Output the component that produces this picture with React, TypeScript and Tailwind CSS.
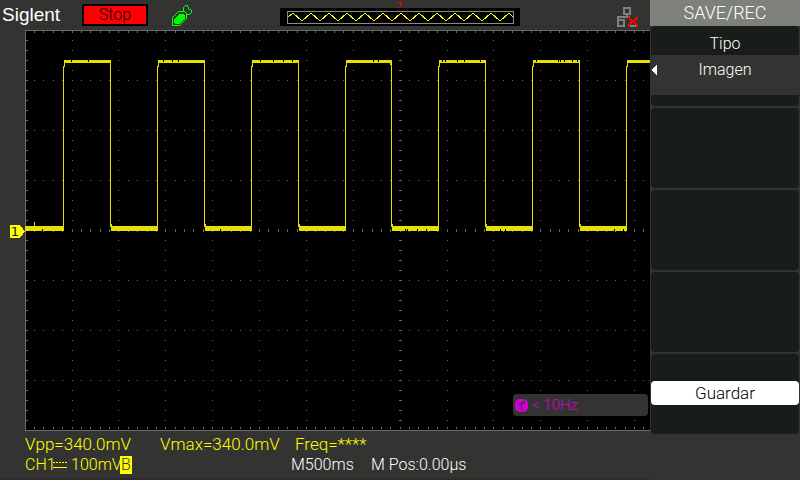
import React from "react";

const PLOT_W = 625;
const PLOT_H = 400;
const STEP_X = 9.375;
const CENTER_X = 375;

function range(n: number) {
  return Array.from({ length: n }, (_, i) => i);
}

// Rectangles are collected as one path so that the grid stays light.
function rect(x: number, y: number, w: number, h: number) {
  return `M${x} ${y}h${w}v${h}h${-w}z`;
}

// Minor steps are 1/5 division wide; columns sit on every fifth step.
function gridX(step: number) {
  return Math.floor(CENTER_X + (step - 40) * STEP_X + 0.2);
}

function Graticule() {
  let dots = "";
  for (const row of [50, 100, 150, 250, 300, 350]) {
    for (const s of range(66)) {
      dots += rect(gridX(s + 1), row, 1, 1);
    }
  }
  for (const c of range(13)) {
    for (const r of range(39)) {
      dots += rect(gridX(c * 5 + 5), (r + 1) * 10, 1, 1);
    }
  }
  let ticks = "";
  for (const s of range(66)) {
    const x = gridX(s + 1);
    ticks += rect(x, 1, 1, 2) + rect(x, 397, 1, 2) + rect(x, 199, 1, 3);
  }
  for (const r of range(40)) {
    ticks += rect(1, r * 10, 2, 1) + rect(374, r * 10, 3, 1);
  }
  return (
    <g fill="#6b6b6b">
      <path d={dots} />
      <path d={ticks} />
      <path d={rect(0, 0, 1, PLOT_H) + rect(0, 0, PLOT_W, 1) + rect(0, PLOT_H, PLOT_W, 1)} />
    </g>
  );
}

const RISES = [38, 132, 226, 320, 413, 507, 601];
const FALLS = [85, 179, 273, 366, 460, 554];
const NOTCHES = [46, 63, 138, 147, 153, 235, 248, 258, 267, 348, 353, 417, 420, 432, 439, 455, 511, 533, 535, 539, 547, 552];
const LOW_NOTCHES = [17, 195, 380, 382, 392, 401, 475, 480, 589, 598];

function Trace() {
  let d = "";
  RISES.forEach((x, i) => {
    const end = FALLS[i] ?? PLOT_W;
    d += rect(x, 36, 1, 165) + rect(x + 1, 31, 1, 6) + rect(x + 1, 30, end - x, 3);
  });
  FALLS.forEach((x, i) => {
    d += rect(x, 31, 1, 166) + rect(x + 1, 194, 1, 4) + rect(x + 1, 196, RISES[i + 1] - x, 5);
  });
  d += rect(0, 196, 39, 5) + rect(9, 192, 1, 4) + rect(365, 33, 1, 2);
  return (
    <g>
      <path fill="#e6e200" d={d} />
      <path
        fill="#000"
        d={
          NOTCHES.map((x) => rect(x, 30, 1, 2)).join("") +
          LOW_NOTCHES.map((x) => rect(x, 199, 1, 2)).join("")
        }
      />
    </g>
  );
}

function Plot() {
  return (
    <svg
      className="block h-[401px] w-full"
      viewBox="0 0 625 401"
      preserveAspectRatio="none"
      shapeRendering="crispEdges"
      role="img"
      aria-label="CH1"
    >
      <rect width="625" height="401" fill="#000" />
      <Graticule />
      <Trace />
    </svg>
  );
}

function UsbIcon() {
  return (
    <svg width="23" height="22" viewBox="0 0 23 22" shapeRendering="crispEdges" fill="none" stroke="#00ff00">
      <path d="M2.500 21.500v-8l6-6h6l2 2v5l-7 7z" />
      <path d="M4 19v-4l1-1 5-4h3l2 2v2l-5 5-1 1H5z" fill="#00ff00" stroke="none" />
      <path d="M13.500 7v-3.500l2-2h2l1 3 3 2v2l-2 2h-3" />
    </svg>
  );
}

function NetworkIcon() {
  return (
    <svg width="24" height="22" viewBox="0 0 24 22" shapeRendering="crispEdges" fill="none">
      <path d="M8 2h6v6H8zM2 14h6v6H2zM11 8v3M1 11h13M2 11v4M14 20h6" stroke="#808080" strokeWidth="2" />
      <path d="M12 11l10 9M22 11l-10 9" stroke="#ff0000" strokeWidth="2" />
    </svg>
  );
}

function MemoryBar() {
  let wave = "M8 9";
  for (const i of range(25)) {
    wave += `L${13 + i * 9} ${i % 2 === 0 ? 5 : 13}`;
  }
  return (
    <div className="relative h-[18px] w-60 bg-black">
      <svg className="block" width="240" height="18" viewBox="0 0 240 18" shapeRendering="crispEdges" fill="none">
        <rect x="7.500" y="3.500" width="226" height="12" stroke="#8a8a8a" />
        <path d={wave + "L233 9"} stroke="#ffff00" />
      </svg>
      <svg className="absolute -top-1.5 left-[118px]" width="5" height="5" viewBox="0 0 5 5" shapeRendering="crispEdges">
        <path d="M0 0h5v1H3v4H2V1H0z" fill="#ff0000" />
      </svg>
    </div>
  );
}

function TopBar() {
  return (
    <header className="flex h-[30px] items-start">
      <h1 className="w-[82px] pt-1 pl-0.5 font-['Liberation_Sans',sans-serif] text-[19px] leading-[22px] text-white">
        Siglent
      </h1>
      <div className="mt-1 h-[22px] w-[66px] border-2 border-black bg-[#ff0000] text-center text-base leading-[18px] text-black">
        Stop
      </div>
      <div className="mt-1 ml-[22px]">
        <UsbIcon />
      </div>
      <div className="mt-2 ml-[87px]">
        <MemoryBar />
      </div>
      <div className="mt-1.5 mr-2.5 ml-auto">
        <NetworkIcon />
      </div>
    </header>
  );
}

function ChannelMarker() {
  return (
    <svg width="15" height="14" viewBox="0 0 15 14" role="img" aria-label="1">
      <path d="M0 0h10l5 6.500-5 6.500H0z" fill="#ffff00" shapeRendering="crispEdges" />
      <text x="5" y="11" textAnchor="middle" fontSize="13" fontWeight="400" fontFamily="DejaVu Sans" fill="#222">
        1
      </text>
    </svg>
  );
}

function Frequency() {
  return (
    <div className="absolute top-[364px] right-0.5 flex h-[22px] w-[135px] items-center gap-1 rounded bg-[#333431] pl-0.5 text-[15px] text-[#d000d0]">
      <svg width="13" height="13" viewBox="0 0 13 13" shapeRendering="crispEdges">
        <path d="M3 0h7v1h2v2h1v7h-1v2h-2v1H3v-1H1v-2H0V3h1V1h2z" fill="#d000d0" />
        <path d="M7 2h3v1H7v1h3v1H7v6H6V5H4V4h2V3h1z" fill="#333431" />
      </svg>
      <span>&lt; 10Hz</span>
    </div>
  );
}

function DcIcon() {
  return (
    <svg width="14" height="6" viewBox="0 0 14 6" shapeRendering="crispEdges" stroke="#ffff00">
      <path d="M0 .500h14" strokeDasharray="2 1" />
      <path d="M0 5.500h14" />
    </svg>
  );
}

function Readouts() {
  return (
    <footer className="flex h-[49px] flex-col border-b-2 border-[#2d2a29] pt-[3px] pl-[25px] leading-5 text-[#ffff00]">
      <div className="flex">
        <span className="w-[135px]">Vpp=340.0mV</span>
        <span className="w-[135px]">Vmax=340.0mV</span>
        <span>Freq=****</span>
      </div>
      <div className="flex text-base leading-[22px]">
        <div className="flex w-[266px] items-center">
          <span className="w-7">CH1</span>
          <DcIcon />
          <span className="w-[53px] pl-1">100mV</span>
          <span className="h-[18px] w-3 bg-[#ffff00] text-center leading-[18px] text-[#333431]">B</span>
        </div>
        <span className="w-20 text-white">M500ms</span>
        <span className="text-white">M Pos:0.00µs</span>
      </div>
    </footer>
  );
}

function SideMenu() {
  return (
    <aside className="flex w-[150px] flex-col text-center text-white">
      <h2 className="h-[26px] bg-[#7e807c] text-lg leading-[26px]">SAVE/REC</h2>
      <div className="flex flex-col gap-0.5 pr-px pl-px">
        <button type="button" className="relative flex h-20 flex-col rounded bg-[#191d19] pb-[11px] text-base">
          <span className="w-full pt-1.5 leading-[23px]">Tipo</span>
          <span className="w-full flex-1 bg-[#333431] pt-0.5 leading-[26px]">Imagen</span>
          <svg className="absolute top-[38px] left-0" width="6" height="12" viewBox="0 0 6 12" fill="#fff" shapeRendering="crispEdges">
            <path d="M6 0v12L0 6z" />
          </svg>
        </button>
        <button type="button" aria-label="F2" className="h-20 rounded bg-[#191d19]" />
        <button type="button" aria-label="F3" className="h-20 rounded bg-[#191d19]" />
        <button type="button" aria-label="F4" className="h-20 rounded bg-[#191d19]" />
        <button type="button" className="flex h-20 flex-col rounded bg-[#191d19] pt-[27px]">
          <span className="h-6 w-full rounded-sm bg-white leading-6 text-black">Guardar</span>
        </button>
      </div>
    </aside>
  );
}

export default function App() {
  return (
    <div className="flex min-h-screen bg-[#333431] font-['Roboto',sans-serif] text-[17px] font-light">
      <main className="flex flex-1 flex-col">
        <TopBar />
        <div className="flex">
          <div className="w-[25px] pt-[195px] pl-2.5">
            <ChannelMarker />
          </div>
          <div className="relative flex-1">
            <Plot />
            <Frequency />
          </div>
        </div>
        <Readouts />
      </main>
      <SideMenu />
    </div>
  );
}
